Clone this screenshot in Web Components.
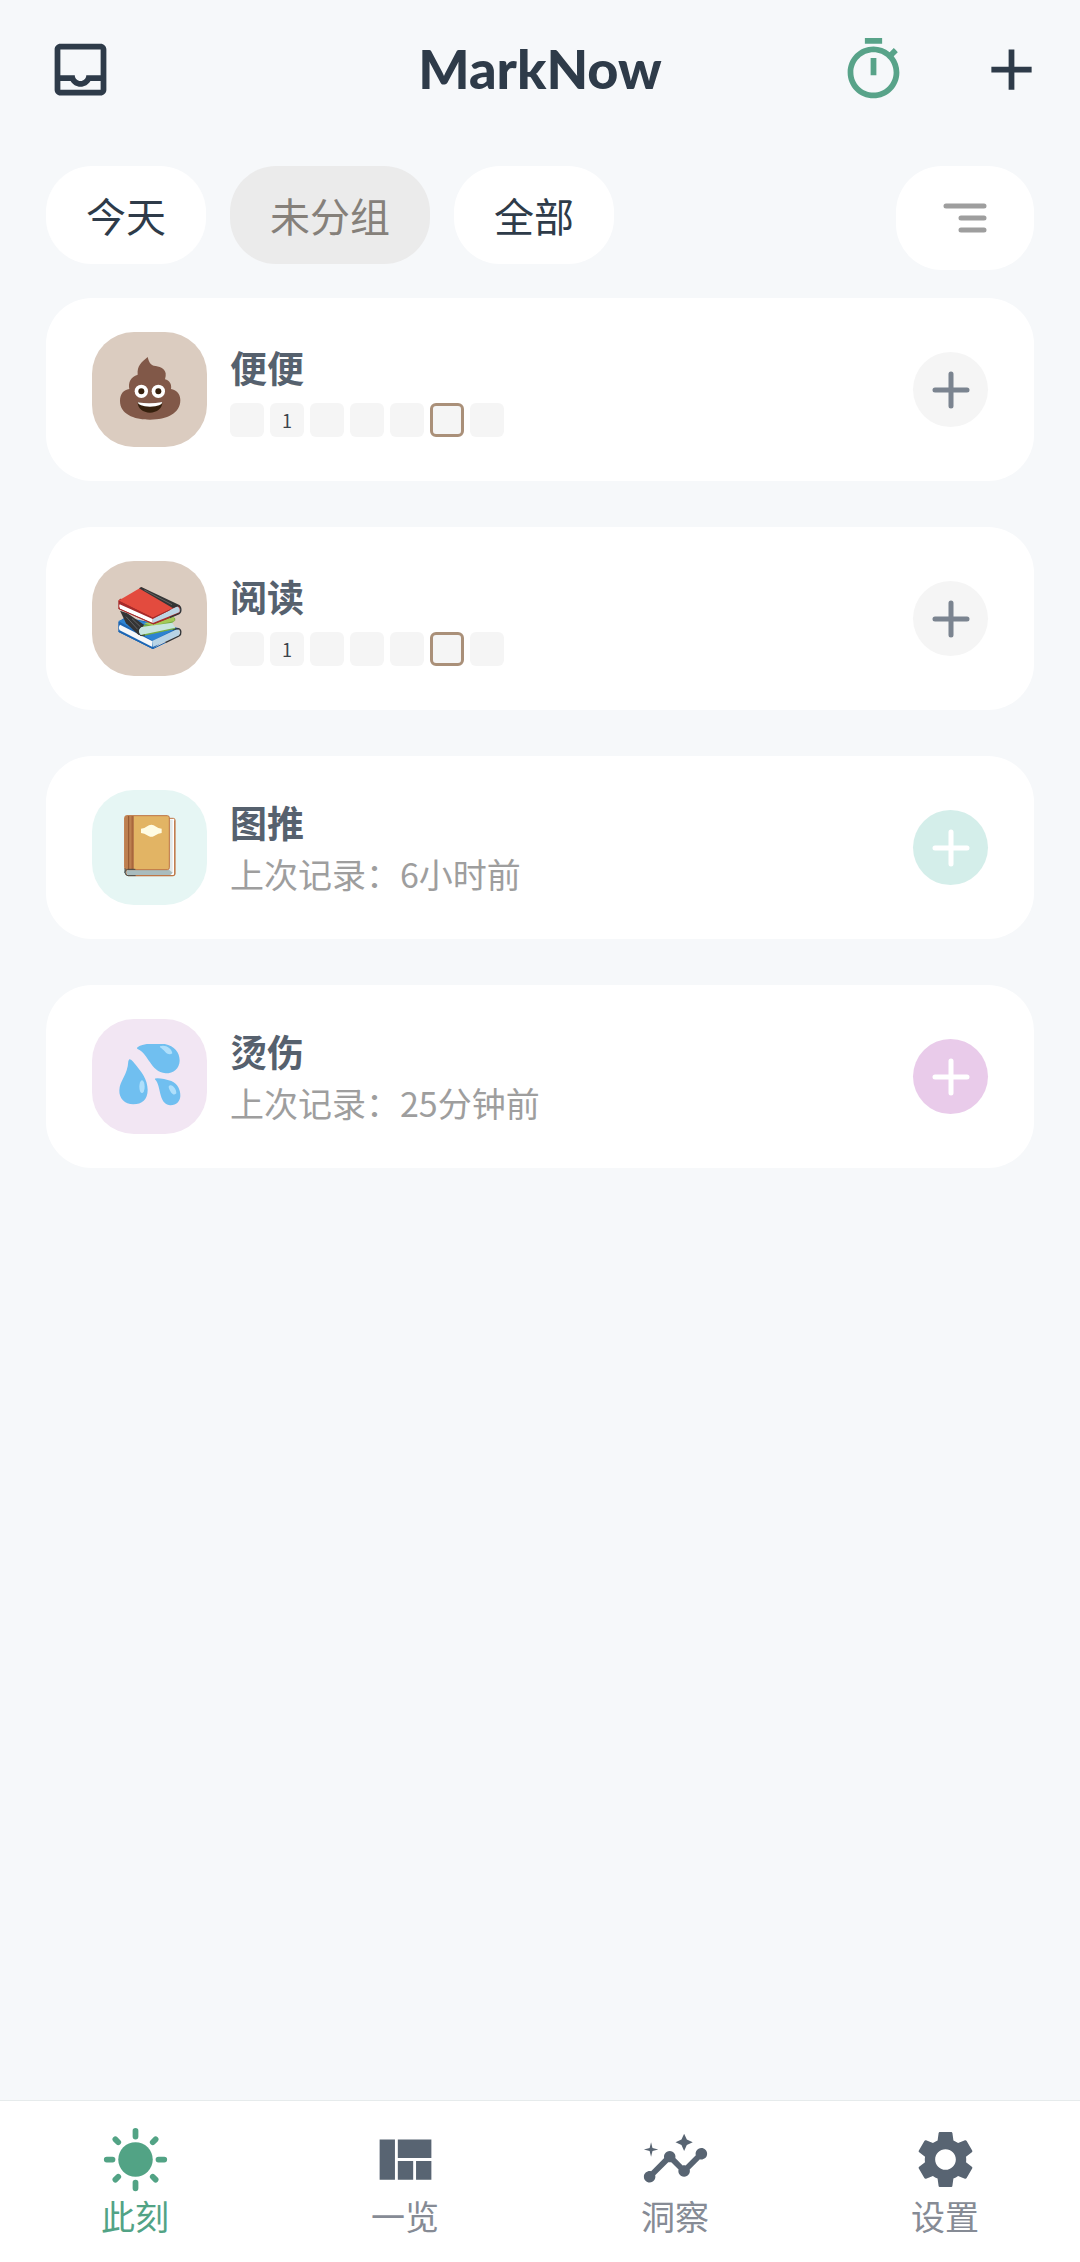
<!DOCTYPE html>
<html lang="zh-CN">
<head>
<meta charset="utf-8">
<meta name="viewport" content="width=device-width, initial-scale=1">
<title>MarkNow</title>
<style>
  body {
    margin: 0;
    background: #f6f8fa;
    color: #2e3b49;
    font-family: "Noto Sans CJK SC", sans-serif;
  }
</style>
</head>
<body>
<mark-app>
  <app-header slot="header">MarkNow</app-header>

  <group-tabs slot="tabs">
    <group-chip>今天</group-chip>
    <group-chip active>未分组</group-chip>
    <group-chip>全部</group-chip>
  </group-tabs>

  <mark-card name="便便" tint="#dbccc0" button="#f5f5f5" plus="#7b8490">
    <svg slot="icon" viewBox="95 95 195 195" aria-hidden="true">
      <path fill="#815848" d="M187 95C190 104 191 116 205 121C222 123 238 128 241 144Q242 154 239 162C252 165 260 177 257 191C273 195 285 204 285 224C285 264 245 283 194 283C143 283 104 265 104 227C104 205 115 194 132 191C128 172 136 154 157 148C155 120 168 112 187 95Z"/>
      <circle cx="168" cy="198" r="20" fill="#fff"/>
      <circle cx="219" cy="198" r="20" fill="#fff"/>
      <circle cx="168" cy="198" r="9" fill="#35200d"/>
      <circle cx="219" cy="198" r="9" fill="#35200d"/>
      <path fill="#35200d" d="M157 231Q194 239 231 231C231 249 215 262 194 262S157 249 157 231Z"/>
      <path fill="#fff" d="M157 231Q194 237 231 230Q230 243 194 244Q159 243 157 231Z"/>
    </svg>
    <week-strip counts=",1,,,,," today="5"></week-strip>
  </mark-card>

  <mark-card name="阅读" tint="#dbccc0" button="#f5f5f5" plus="#7b8490">
    <svg slot="icon" viewBox="95 92 195 195" aria-hidden="true">
      <path fill="#1c66b4" d="M99 199L120 186L283 219L202 281L99 229Z"/>
      <path fill="#2c83d2" d="M99 197L125 188L272 220L202 256Z"/>
      <path fill="#f6f8fa" d="M104 208L200 257V274L103 225Q98 216 104 208Z"/>
      <path fill="#b8d4e6" d="M200 257L276 221Q287 228 281 241L202 275Z"/>
      <path fill="none" stroke="#303438" stroke-width="4" d="M262 223L277 220C289 220 289 237 281 242L240 262"/>
      <path fill="none" stroke="#1c66b4" stroke-width="3" d="M100 229L203 280L240 262"/>
      <path fill="#75ad43" d="M158 213L269 187L270 195L260 203L270 221L170 243Z"/>
      <path fill="#a4c957" d="M176 204L266 184L268 197L200 212Z"/>
      <path fill="#333435" d="M104 166L126 174L176 208L160 239L122 204Z"/>
      <path stroke="#626365" stroke-width="3" d="M122 184L157 222M140 190L166 215"/>
      <path fill="#c8e5df" d="M168 215L261 202L270 217L166 239Q154 226 168 215Z"/>
      <path fill="none" stroke="#333435" stroke-width="3" d="M171 213C156 214 155 238 167 241L179 239"/>
      <path fill="#a62b2a" d="M99 137L104 130L284 150L283 175L204 207L99 160Z"/>
      <path fill="#fff" d="M103 147L202 191V203L104 160Q99 154 103 147Z"/>
      <path fill="#bdd5e4" d="M202 191L276 153Q286 159 282 171L203 203Z"/>
      <path fill="#e34b3e" d="M99 136L168 96L274 153L203 187Z"/>
      <path fill="#343536" d="M161 99L168 95L282 149L262 158Z"/>
      <path stroke="#65625f" stroke-width="3" d="M177 104L260 148"/>
      <path fill="none" stroke="#303438" stroke-width="4" d="M262 156L277 151C289 151 289 171 281 175L253 187"/>
      <path fill="none" stroke="#a62b2a" stroke-width="3" d="M100 137L202 188L253 164M100 160L204 206L253 187"/>
    </svg>
    <week-strip counts=",1,,,,," today="5"></week-strip>
  </mark-card>

  <mark-card name="图推" tint="#e6f6f4" button="#d4eeea" plus="#ffffff">
    <svg slot="icon" viewBox="80 78 195 195" aria-hidden="true">
      <rect x="108" y="88" width="146" height="172" rx="5" fill="#fff" stroke="#bd7442" stroke-width="3"/>
      <path fill="#e2e8e9" d="M237 92H247V250Q246 258 236 257Z"/>
      <path fill="#a9bcbe" d="M112 242H236L247 251L240 258H112Q104 250 112 242Z"/>
      <rect x="103" y="80" width="134" height="162" rx="6" fill="#e2b464" stroke="#bd7442" stroke-width="3"/>
      <path fill="#bd8050" d="M104 84Q104 80 109 80H131V242H104Z"/>
      <path stroke="#91552f" stroke-width="3" d="M115 81V241"/>
      <path stroke="#a9673c" stroke-width="5" d="M126 81V241"/>
      <path fill="none" stroke="#bd7442" stroke-width="3" d="M253 94V255Q253 260 246 260H136"/>
      <path fill="none" stroke="#454b49" stroke-width="3" d="M135 241H112Q104 242 104 250Q104 259 113 260H136M104 238V252"/>
      <path fill="#fffce3" d="M152 119L162 117Q170 112 176 109Q183 105 190 109L204 117L214 119V132L204 134L190 142Q183 145 176 142L162 134L152 132Z"/>
    </svg>
    上次记录：6小时前
  </mark-card>

  <mark-card name="烫伤" tint="#f2e6f3" button="#e9cbea" plus="#ffffff">
    <svg slot="icon" viewBox="80 767 195 195" aria-hidden="true">
      <g fill="#70bff0">
        <path d="M140 780C139 775 160 764 203 765C245 765 268 787 268 817C267 841 250 855 226 855C180 851 175 796 143 783Q140 782 140 780Z"/>
        <path d="M116 814C120 809 128 820 136 829C153 850 172 873 172 905C172 933 155 948 129 948C103 948 86 930 87 906C88 876 112 861 114 818Z"/>
        <path d="M194 871C199 867 224 871 243 878C263 887 271 906 270 924C269 940 257 952 239 951C203 945 213 892 195 874Q193 872 194 871Z"/>
      </g>
      <g fill="#afdffb">
        <path d="M209 774C225 768 244 780 246 795C240 800 229 798 223 789C216 780 207 778 209 774Z"/>
        <ellipse cx="155" cy="895" rx="8" ry="19"/>
        <path d="M237 892C246 886 259 903 258 915C254 921 246 919 241 910C236 902 233 894 237 892Z"/>
      </g>
    </svg>
    上次记录：25分钟前
  </mark-card>

  <tab-bar slot="nav">
    <tab-item label="此刻" active>
      <svg viewBox="0 0 24 24" aria-hidden="true">
        <circle cx="12" cy="12" r="6"/>
        <path fill="none" stroke="currentColor" stroke-width="2" stroke-linecap="round" d="M12 2v2M12 20v2M2 12h2M20 12h2M5 5l1 1M18 18l1 1M5 19l1-1M18 6l1-1"/>
      </svg>
    </tab-item>
    <tab-item label="一览">
      <svg viewBox="0 0 24 24" aria-hidden="true">
        <path d="M21 5v6.5H9.33V5H21zm-6.33 14v-6.5H9.33V19h5.34zm1-6.5V19H21v-6.5h-5.33zM8.33 19V5H3v14h5.33z"/>
      </svg>
    </tab-item>
    <tab-item label="洞察">
      <svg viewBox="0 0 24 24" aria-hidden="true">
        <path d="M21 8c-1.45 0-2.26 1.44-1.93 2.51l-3.55 3.56c-.3-.09-.74-.09-1.04 0l-2.55-2.55C12.27 10.45 11.46 9 10 9c-1.45 0-2.27 1.44-1.93 2.52l-4.56 4.55C2.44 15.74 1 16.55 1 18c0 1.1.9 2 2 2 1.45 0 2.26-1.44 1.93-2.51l4.55-4.56c.3.09.74.09 1.04 0l2.55 2.55C12.73 16.55 13.54 18 15 18c1.45 0 2.27-1.44 1.93-2.52l3.56-3.55C21.56 12.26 23 11.45 23 10c0-1.1-.9-2-2-2z"/>
        <path d="M15 9l.94-2.07L18 6l-2.06-.93L15 3l-.92 2.07L12 6l2.08.93zM3.5 11L4 9l2-.5L4 8l-.5-2L3 8l-2 .5L3 9z"/>
      </svg>
    </tab-item>
    <tab-item label="设置">
      <svg viewBox="0 0 24 24" aria-hidden="true">
        <path d="M19.14 12.94c.04-.3.06-.61.06-.94 0-.32-.02-.64-.07-.94l2.03-1.58c.18-.14.23-.41.12-.61l-1.92-3.32c-.12-.22-.37-.29-.59-.22l-2.39.96c-.5-.38-1.03-.7-1.62-.94l-.36-2.54c-.04-.24-.24-.41-.48-.41h-3.84c-.24 0-.43.17-.47.41l-.36 2.54c-.59.24-1.13.57-1.62.94l-2.39-.96c-.22-.08-.47 0-.59.22L2.74 8.87c-.12.21-.08.47.12.61l2.03 1.58c-.05.3-.09.63-.09.94s.02.64.07.94l-2.03 1.58c-.18.14-.23.41-.12.61l1.92 3.32c.12.22.37.29.59.22l2.39-.96c.5.38 1.03.7 1.62.94l.36 2.54c.05.24.24.41.48.41h3.84c.24 0 .44-.17.47-.41l.36-2.54c.59-.24 1.13-.56 1.62-.94l2.39.96c.22.08.47 0 .59-.22l1.92-3.32c.12-.22.07-.47-.12-.61l-2.01-1.58zM12 15.6c-1.98 0-3.6-1.62-3.6-3.6s1.62-3.6 3.6-3.6 3.6 1.62 3.6 3.6-1.62 3.6-3.6 3.6z"/>
      </svg>
    </tab-item>
  </tab-bar>
</mark-app>

<script>
class MarkApp extends HTMLElement {
  constructor() {
    super();
    this.attachShadow({ mode: 'open' }).innerHTML = `
      <style>
        :host {
          display: flex;
          flex-direction: column;
          min-height: 100vh;
        }
        main {
          flex: 1;
          padding: 28px 46px 46px;
        }
        .list {
          display: grid;
          gap: 46px;
          margin-top: 28px;
        }
      </style>
      <slot name="header"></slot>
      <main>
        <slot name="tabs"></slot>
        <div class="list"><slot></slot></div>
      </main>
      <slot name="nav"></slot>
    `;
  }
}

class AppHeader extends HTMLElement {
  constructor() {
    super();
    this.attachShadow({ mode: 'open' }).innerHTML = `
      <style>
        :host { display: block; }
        header {
          display: grid;
          grid-template-columns: 1fr auto 1fr;
          align-items: center;
          height: 138px;
        }
        h1 {
          margin: 0;
          font: 900 54px/64px Lato, sans-serif;
        }
        button {
          display: inline-flex;
          align-items: center;
          justify-content: center;
          width: 138px;
          height: 138px;
          padding: 0;
          border: 0;
          background: none;
          color: inherit;
        }
        svg {
          width: 69px;
          height: 69px;
          fill: currentColor;
        }
        .nav { padding-left: 11px; }
        .actions {
          display: flex;
          justify-content: flex-end;
        }
        .timer { color: #58a389; }
      </style>
      <header>
        <div class="nav">
          <button aria-label="归档">
            <svg viewBox="0 0 24 24"><path d="M19 3H5c-1.1 0-2 .9-2 2v14c0 1.1.9 2 2 2h14c1.1 0 2-.9 2-2V5c0-1.1-.9-2-2-2zm0 16H5v-3h3.56c.69 1.19 1.97 2 3.45 2s2.75-.81 3.45-2H19v3zm0-5h-4.99c0 1.1-.9 2-2 2s-2-.9-2-2H5V5h14v9z"/></svg>
          </button>
        </div>
        <h1><slot></slot></h1>
        <div class="actions">
          <button class="timer" aria-label="计时">
            <svg viewBox="0 0 24 24"><path d="M15 1H9v2h6V1zm-4 13h2V8h-2v6zm8.03-6.61l1.42-1.42c-.43-.51-.9-.99-1.41-1.41l-1.42 1.42C16.07 4.74 14.12 4 12 4c-4.97 0-9 4.03-9 9s4.02 9 9 9 9-4.03 9-9c0-2.12-.74-4.07-1.97-5.61zM12 20c-3.87 0-7-3.13-7-7s3.13-7 7-7 7 3.13 7 7-3.13 7-7 7z"/></svg>
          </button>
          <button aria-label="新建">
            <svg viewBox="0 0 24 24"><path d="M19 13h-6v6h-2v-6H5v-2h6V5h2v6h6v2z"/></svg>
          </button>
        </div>
      </header>
    `;
  }
}

class GroupTabs extends HTMLElement {
  constructor() {
    super();
    this.attachShadow({ mode: 'open' }).innerHTML = `
      <style>
        :host {
          display: flex;
          align-items: flex-start;
          gap: 24px;
        }
        .sort {
          display: flex;
          align-items: center;
          justify-content: center;
          width: 138px;
          height: 104px;
          margin-left: auto;
          padding: 0;
          border: 0;
          border-radius: 46px;
          background: #fff;
        }
        svg {
          width: 44px;
          height: 30px;
          stroke: #9e9e9e;
          stroke-width: 5;
          stroke-linecap: round;
        }
      </style>
      <slot></slot>
      <button class="sort" aria-label="排序">
        <svg viewBox="0 0 44 30"><path d="M3 3H41M18 15H41M18 27H41"/></svg>
      </button>
    `;
  }
}

class GroupChip extends HTMLElement {
  constructor() {
    super();
    this.attachShadow({ mode: 'open' }).innerHTML = `
      <style>
        :host { display: block; }
        button {
          display: block;
          padding: 20px 40px;
          border: 0;
          border-radius: 46px;
          background: #fff;
          color: #2e3b49;
          font: 400 40px/58px "Noto Sans CJK SC", sans-serif;
        }
        :host([active]) button {
          background: #ebebeb;
          color: #85807a;
        }
      </style>
      <button><slot></slot></button>
    `;
  }
}

class MarkCard extends HTMLElement {
  constructor() {
    super();
    const name = this.getAttribute('name');
    this.attachShadow({ mode: 'open' }).innerHTML = `
      <style>
        :host {
          display: flex;
          align-items: center;
          gap: 23px;
          padding: 34px 46px;
          border-radius: 46px;
          background: #fff;
        }
        .tile {
          display: flex;
          align-items: center;
          justify-content: center;
          width: 115px;
          height: 115px;
          border-radius: 42px;
          background: ${this.getAttribute('tint')};
        }
        ::slotted(svg) {
          width: 65px;
          height: 65px;
        }
        .body {
          flex: 1;
          color: #9e9e9e;
          font-size: 34px;
          line-height: 52px;
        }
        h2 {
          margin: 0;
          color: #56616e;
          font-size: 37px;
          font-weight: 700;
          line-height: 52px;
        }
        button {
          display: flex;
          align-items: center;
          justify-content: center;
          width: 75px;
          height: 75px;
          padding: 0;
          border: 0;
          border-radius: 50%;
          background: ${this.getAttribute('button')};
        }
        .plus {
          width: 38px;
          height: 38px;
          stroke: ${this.getAttribute('plus')};
          stroke-width: 5;
          stroke-linecap: round;
        }
      </style>
      <div class="tile"><slot name="icon"></slot></div>
      <div class="body">
        <h2>${name}</h2>
        <slot></slot>
      </div>
      <button aria-label="记录${name}">
        <svg class="plus" viewBox="0 0 38 38"><path d="M19 3V35M3 19H35"/></svg>
      </button>
    `;
  }
}

// seven day cells, today's one is outlined
class WeekStrip extends HTMLElement {
  constructor() {
    super();
    const today = +this.getAttribute('today');
    const cells = this.getAttribute('counts').split(',')
      .map((count, i) => `<span class="${i === today ? 'today' : ''}">${count}</span>`)
      .join('');
    this.attachShadow({ mode: 'open' }).innerHTML = `
      <style>
        :host {
          display: flex;
          gap: 6px;
          padding: 10px 0 2px;
        }
        span {
          box-sizing: border-box;
          width: 34px;
          height: 34px;
          border-radius: 6px;
          background: #f5f5f5;
          color: #3c434b;
          font-size: 18px;
          line-height: 34px;
          text-align: center;
        }
        .today { border: 3px solid #aa9079; }
      </style>
      ${cells}
    `;
  }
}

class TabBar extends HTMLElement {
  constructor() {
    super();
    this.attachShadow({ mode: 'open' }).innerHTML = `
      <style>
        :host {
          display: block;
          border-top: 1px solid #e6ebec;
          background: #fff;
        }
        nav {
          display: grid;
          grid-template-columns: repeat(4, 1fr);
          padding: 24px 0;
        }
      </style>
      <nav><slot></slot></nav>
    `;
  }
}

class TabItem extends HTMLElement {
  constructor() {
    super();
    this.attachShadow({ mode: 'open' }).innerHTML = `
      <style>
        :host {
          display: block;
          color: #586472;
        }
        a {
          display: flex;
          flex-direction: column;
          align-items: center;
          color: inherit;
          text-decoration: none;
        }
        ::slotted(svg) {
          width: 69px;
          height: 69px;
          fill: currentColor;
        }
        span {
          color: #868b95;
          font-size: 34px;
          line-height: 44px;
        }
        :host([active]), :host([active]) span { color: #52a385; }
      </style>
      <a href="#">
        <slot></slot>
        <span>${this.getAttribute('label')}</span>
      </a>
    `;
  }
}

customElements.define('mark-app', MarkApp);
customElements.define('app-header', AppHeader);
customElements.define('group-tabs', GroupTabs);
customElements.define('group-chip', GroupChip);
customElements.define('mark-card', MarkCard);
customElements.define('week-strip', WeekStrip);
customElements.define('tab-bar', TabBar);
customElements.define('tab-item', TabItem);
</script>
</body>
</html>
